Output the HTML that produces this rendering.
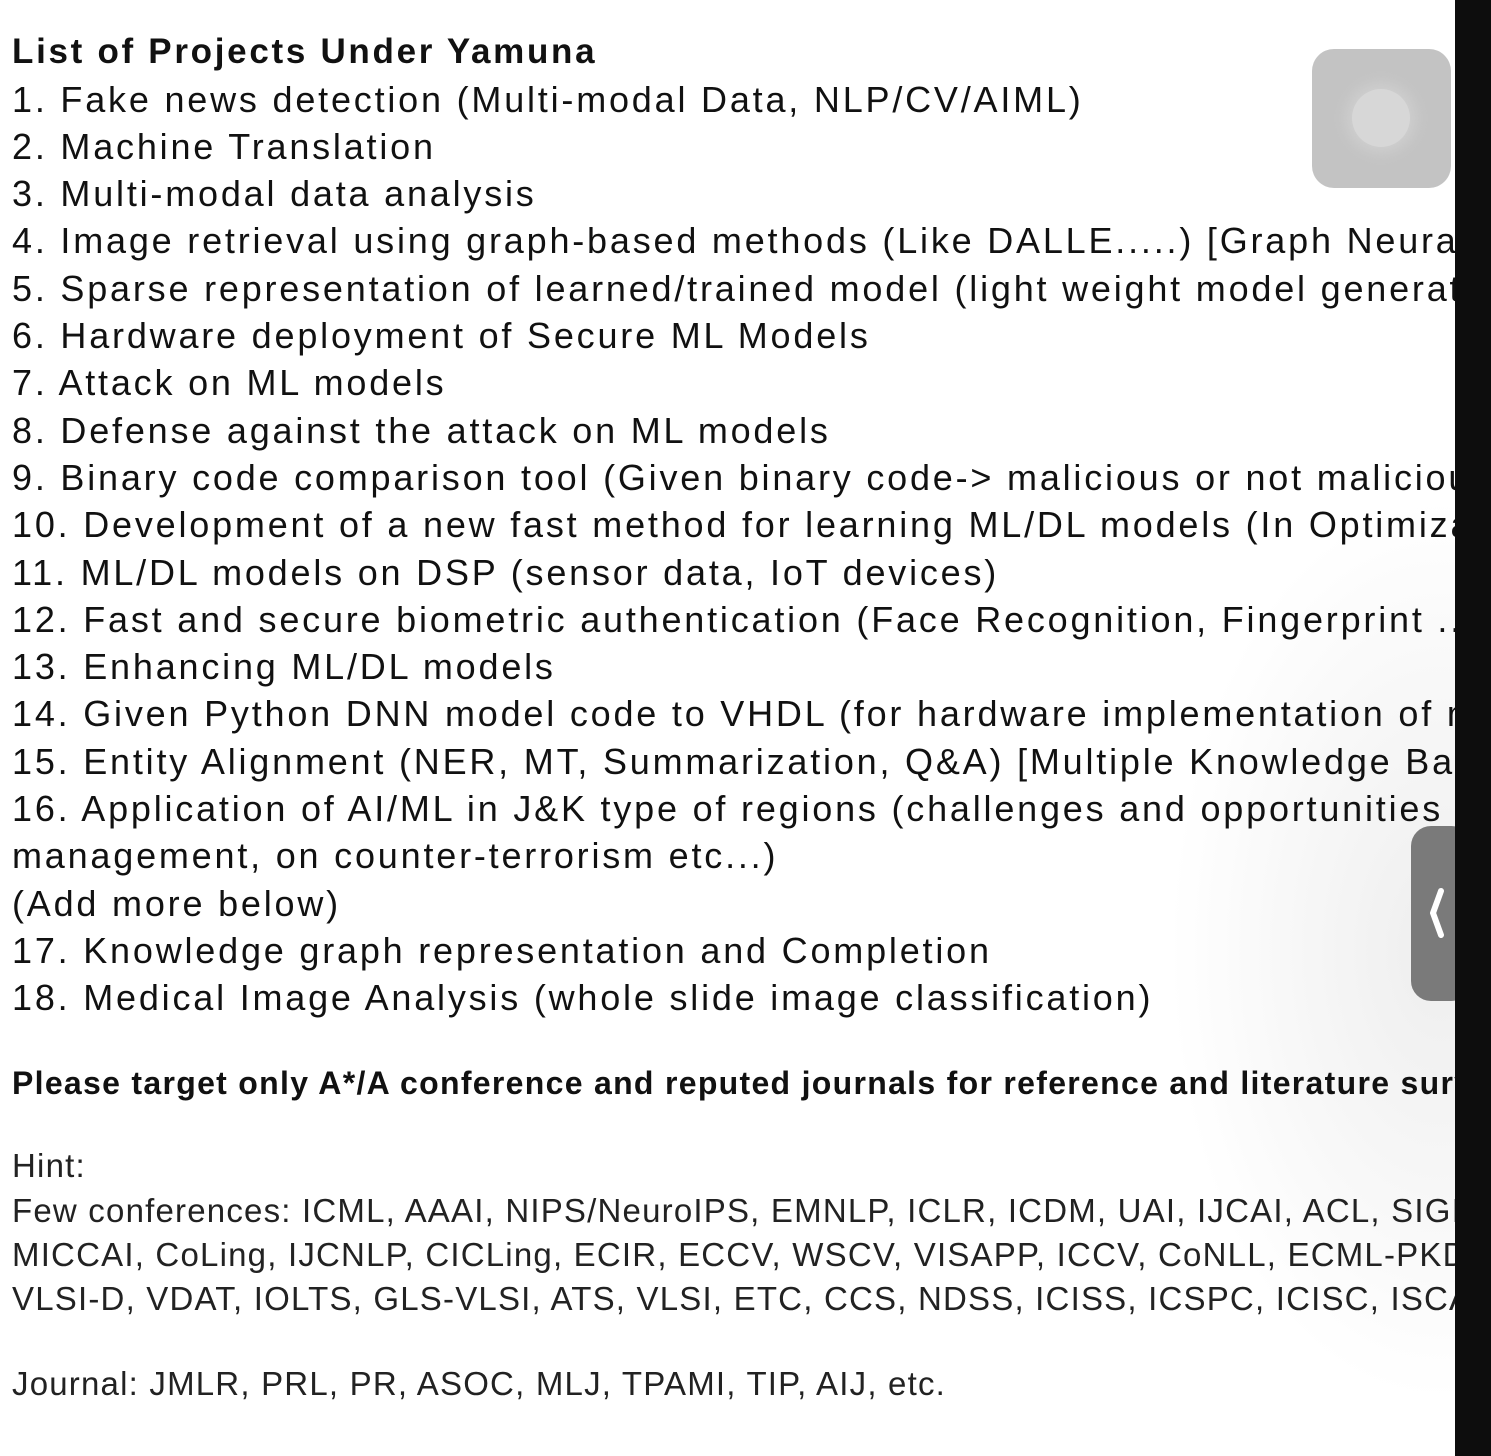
<!DOCTYPE html>
<html><head><meta charset="utf-8"><style>
html,body{margin:0;padding:0;}
body{width:1491px;height:1456px;background:#fff;position:relative;overflow:hidden;font-family:"Liberation Sans",sans-serif;color:#111;}
.wrap{position:absolute;left:0;top:0;width:1455px;height:1456px;overflow:hidden;background:radial-gradient(ellipse 300px 500px at 1440px 950px,#eeeeee,#fff 90%);}
.l{position:absolute;left:12px;white-space:nowrap;font-size:36px;line-height:40px;letter-spacing:2.8px;}
.b{font-weight:bold;font-size:35px;letter-spacing:2.7px;}
.s{font-size:33px;color:#222;letter-spacing:1.2px;}
.strip{position:absolute;left:1455px;top:0;width:36px;height:1456px;background:#0d0d0d;}
.sq{position:absolute;left:1312px;top:49px;width:139px;height:139px;border-radius:22px;background:#c3c3c3;}
.sq div{position:absolute;left:40px;top:40px;width:58px;height:58px;border-radius:50%;background:#d7d7d7;box-shadow:0 0 14px 6px #cfcfcf;}
.tab{position:absolute;left:1411px;top:826px;width:60px;height:175px;border-radius:20px;background:#7a7a7a;}
</style></head><body>
<div class="wrap">
<div class="l b" style="top:32px">List of Projects Under Yamuna</div>
<div class="l" style="top:80px">1. Fake news detection (Multi-modal Data, NLP/CV/AIML)</div>
<div class="l" style="top:127px">2. Machine Translation</div>
<div class="l" style="top:174px">3. Multi-modal data analysis</div>
<div class="l" style="top:221px">4. Image retrieval using graph-based methods (Like DALLE.....) [Graph Neural Networks]</div>
<div class="l" style="top:269px">5. Sparse representation of learned/trained model (light weight model generation)</div>
<div class="l" style="top:316px">6. Hardware deployment of Secure ML Models</div>
<div class="l" style="top:363px">7. Attack on ML models</div>
<div class="l" style="top:411px">8. Defense against the attack on ML models</div>
<div class="l" style="top:458px">9. Binary code comparison tool (Given binary code-&gt; malicious or not malicious)</div>
<div class="l" style="top:505px">10. Development of a new fast method for learning ML/DL models (In Optimization)</div>
<div class="l" style="top:553px">11. ML/DL models on DSP (sensor data, IoT devices)</div>
<div class="l" style="top:600px">12. Fast and secure biometric authentication (Face Recognition, Fingerprint ...)</div>
<div class="l" style="top:647px">13. Enhancing ML/DL models</div>
<div class="l" style="top:694px">14. Given Python DNN model code to VHDL (for hardware implementation of models)</div>
<div class="l" style="top:742px">15. Entity Alignment (NER, MT, Summarization, Q&amp;A) [Multiple Knowledge Bases]</div>
<div class="l" style="top:789px">16. Application of AI/ML in J&amp;K type of regions (challenges and opportunities in disaster</div>
<div class="l" style="top:836px">management, on counter-terrorism etc...)</div>
<div class="l" style="top:884px">(Add more below)</div>
<div class="l" style="top:931px">17. Knowledge graph representation and Completion</div>
<div class="l" style="top:978px">18. Medical Image Analysis (whole slide image classification)</div>
<div class="l b" style="top:1063px;font-size:32px;letter-spacing:1.3px">Please target only A*/A conference and reputed journals for reference and literature survey</div>
<div class="l s" style="top:1146px">Hint:</div>
<div class="l s" style="top:1191px">Few conferences: ICML, AAAI, NIPS/NeuroIPS, EMNLP, ICLR, ICDM, UAI, IJCAI, ACL, SIGIR,</div>
<div class="l s" style="top:1235px">MICCAI, CoLing, IJCNLP, CICLing, ECIR, ECCV, WSCV, VISAPP, ICCV, CoNLL, ECML-PKDD,</div>
<div class="l s" style="top:1279px">VLSI-D, VDAT, IOLTS, GLS-VLSI, ATS, VLSI, ETC, CCS, NDSS, ICISS, ICSPC, ICISC, ISCAS</div>
<div class="l s" style="top:1364px">Journal: JMLR, PRL, PR, ASOC, MLJ, TPAMI, TIP, AIJ, etc.</div>
<div class="sq"><div></div></div>
<div class="tab"><svg width="44" height="175" style="position:absolute;left:0;top:0"><path d="M30 891 L22 913 L30 935" transform="translate(0,-826)" fill="none" stroke="#fff" stroke-width="6" stroke-linecap="round" stroke-linejoin="round"/></svg></div>
</div>
<div class="strip"></div>
</body></html>
